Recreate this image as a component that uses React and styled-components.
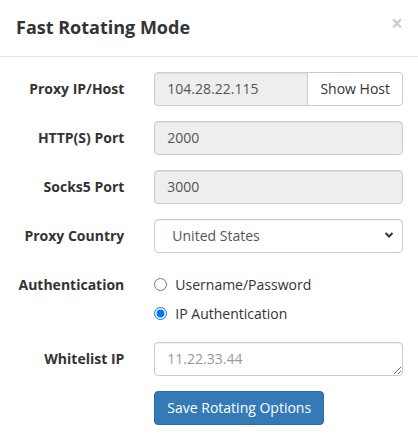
import React, { useState } from "react";
import styled, { createGlobalStyle } from "styled-components";

const GlobalStyle = createGlobalStyle`
  * { box-sizing: border-box; }
  body {
    margin: 0;
    background: #fff;
    font-family: "Open Sans", "Liberation Sans", sans-serif;
    font-size: 14px;
    line-height: 1.42857;
    color: #333;
  }
`;

const Modal = styled.div`
  width: 418px;
  background: #fff;
`;

const Header = styled.div`
  display: flex;
  justify-content: space-between;
  align-items: flex-start;
  padding: 15px 15px 15px 16px;
  border-bottom: 1px solid #e5e5e5;
`;

const Title = styled.h4`
  margin: 0;
  font-size: 18px;
  font-weight: 700;
  line-height: 25.7px;
  color: #333;
`;

const Close = styled.button`
  border: 0;
  background: transparent;
  padding: 0;
  margin-top: -2px;
  font-family: "Open Sans", sans-serif;
  font-size: 21px;
  font-weight: 700;
  line-height: 1;
  color: #000;
  opacity: 0.2;
  text-shadow: 0 1px 0 #fff;
  cursor: pointer;
`;

const Body = styled.form`
  padding: 15px 0;
  display: flex;
  flex-direction: column;
  gap: 15px;
`;

const Row = styled.div`
  display: grid;
  grid-template-columns: 139.33px 1fr;
  align-items: start;
`;

const Label = styled.label`
  padding: 7px 15px 0 15px;
  text-align: right;
  font-weight: 700;
  line-height: 20px;
  color: #333;
`;

const Field = styled.div`
  padding: 0 15px;
  display: flex;
  flex-direction: column;
`;

const Control = styled.input`
  width: 100%;
  height: 34px;
  padding: 6px 12px;
  font-family: inherit;
  font-size: 14px;
  color: #555;
  background: ${(p) => (p.readOnly ? "#eee" : "#fff")};
  border: 1px solid #ccc;
  border-radius: 4px;
  box-shadow: inset 0 1px 1px rgba(0, 0, 0, 0.075);
  outline: none;
`;

const InputGroup = styled.div`
  display: flex;
  ${Control} {
    border-radius: 4px 0 0 4px;
    flex: 1;
    min-width: 0;
  }
`;

const AddonButton = styled.button`
  height: 34px;
  padding: 6px 12px;
  margin-left: -1px;
  font-family: inherit;
  font-size: 14px;
  color: #333;
  background: #fff;
  border: 1px solid #ccc;
  border-radius: 0 4px 4px 0;
  white-space: nowrap;
`;

const SelectWrap = styled.div`
  position: relative;
  svg {
    position: absolute;
    right: 9px;
    top: 12px;
    pointer-events: none;
  }
`;

const Select = styled.select`
  appearance: none;
  width: 100%;
  height: 34px;
  padding: 6px 12px 6px 17px;
  font-family: inherit;
  font-size: 14px;
  color: #555;
  background: #fff;
  border: 1px solid #ccc;
  border-radius: 4px;
  box-shadow: inset 0 1px 1px rgba(0, 0, 0, 0.075);
  outline: none;
`;

const Radios = styled.div`
  padding: 7px 15px 3px;
  display: flex;
  flex-direction: column;
  gap: 9px;
`;

const RadioLabel = styled.label`
  display: flex;
  align-items: center;
  gap: 8px;
  line-height: 20px;
  color: #333;
  input {
    margin: 0;
    width: 13px;
    height: 13px;
  }
`;

const TextArea = styled.textarea`
  width: 100%;
  height: 34px;
  padding: 6px 12px;
  font-family: inherit;
  font-size: 14px;
  line-height: 20px;
  color: #555;
  border: 1px solid #ccc;
  border-radius: 4px;
  box-shadow: inset 0 1px 1px rgba(0, 0, 0, 0.075);
  resize: vertical;
  outline: none;
  &::placeholder {
    color: #999;
  }
`;

const PrimaryButton = styled.button`
  align-self: flex-start;
  height: 34px;
  padding: 6px 12px;
  font-family: inherit;
  font-size: 14px;
  color: #fff;
  background: #337ab7;
  border: 1px solid #2e6da4;
  border-radius: 4px;
`;

export default function App() {
  const [auth, setAuth] = useState("ip");
  return (
    <>
      <GlobalStyle />
      <Modal>
        <Header>
          <Title>Fast Rotating Mode</Title>
          <Close type="button">×</Close>
        </Header>
        <Body onSubmit={(e) => e.preventDefault()}>
          <Row>
            <Label>Proxy IP/Host</Label>
            <Field>
              <InputGroup>
                <Control readOnly value="104.28.22.115" />
                <AddonButton type="button">Show Host</AddonButton>
              </InputGroup>
            </Field>
          </Row>
          <Row>
            <Label>HTTP(S) Port</Label>
            <Field>
              <Control readOnly value="2000" />
            </Field>
          </Row>
          <Row>
            <Label>Socks5 Port</Label>
            <Field>
              <Control readOnly value="3000" />
            </Field>
          </Row>
          <Row>
            <Label>Proxy Country</Label>
            <Field>
              <SelectWrap>
                <Select defaultValue="us">
                  <option value="us">United States</option>
                </Select>
                <svg width="10" height="8" viewBox="0 0 10 8">
                  <path d="M1.5 2 L5 5.5 L8.5 2" fill="none" stroke="#333" strokeWidth="2" />
                </svg>
              </SelectWrap>
            </Field>
          </Row>
          <Row>
            <Label>Authentication</Label>
            <Radios>
              <RadioLabel>
                <input
                  type="radio"
                  name="auth"
                  checked={auth === "user"}
                  onChange={() => setAuth("user")}
                />
                Username/Password
              </RadioLabel>
              <RadioLabel>
                <input
                  type="radio"
                  name="auth"
                  checked={auth === "ip"}
                  onChange={() => setAuth("ip")}
                />
                IP Authentication
              </RadioLabel>
            </Radios>
          </Row>
          <Row>
            <Label>Whitelist IP</Label>
            <Field>
              <TextArea placeholder="11.22.33.44" />
            </Field>
          </Row>
          <Row>
            <span />
            <Field>
              <PrimaryButton type="submit">Save Rotating Options</PrimaryButton>
            </Field>
          </Row>
        </Body>
      </Modal>
    </>
  );
}
